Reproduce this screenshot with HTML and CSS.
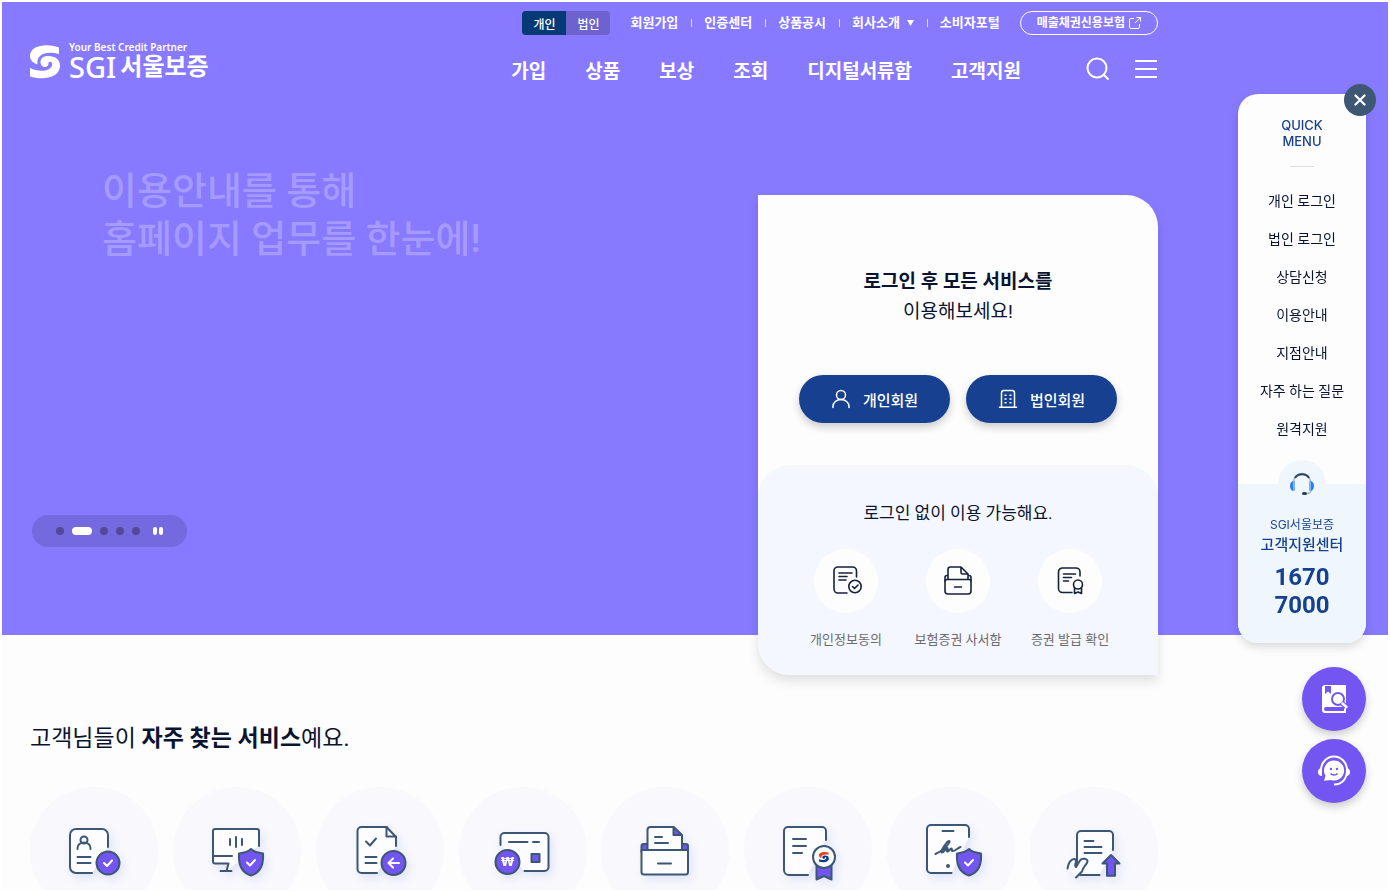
FILE: index.html
```html
<!DOCTYPE html>
<html lang="ko">
<head>
  <meta charset="UTF-8">
  <meta name="viewport" content="width=device-width, initial-scale=1.0">
  <title>SGI서울보증</title>
  <link rel="stylesheet" href="styles.css">
</head>
<body>
  <div class="page">
    <!-- 메인 비주얼 -->
    <div class="hero">
      <header class="header">
        <a href="#" class="logo">
          <svg class="logo-mark" viewBox="0 0 30 34" width="30" height="34" aria-hidden="true">
            <path fill="#fff" d="M29 2.500V9C18 6 6 8 7.500 19.500C3 18 0 15 0 11C0 0 17-2 29 2.500Z"/>
            <path fill="#fff" d="M0 23C8 27 20 27 22 20.500C23 17 20 16 18.500 17.500C19 20 17 22 15 22C12 22 10.500 19.500 10.500 17C10.500 13 14 11 18 11C26 11 30 15 30 21C30 32 14 36 0 31.500Z"/>
          </svg>
          <span class="logo-text">
            <span class="logo-slogan">Your Best Credit Partner</span>
            <span class="logo-name"><span class="logo-en">SGI</span>서울보증</span>
          </span>
        </a>

        <div class="header-right">
          <div class="top-menu">
            <div class="member-type">
              <button type="button" class="on">개인</button>
              <button type="button">법인</button>
            </div>
            <ul class="util">
              <li><a href="#">회원가입</a></li>
              <li><a href="#">인증센터</a></li>
              <li><a href="#">상품공시</a></li>
              <li><a href="#">회사소개<svg class="caret" viewBox="0 0 7 6" width="7" height="6"><path fill="#fff" d="M0 0h7L3.500 6z"/></svg></a></li>
              <li><a href="#">소비자포털</a></li>
            </ul>
            <a href="#" class="btn-credit">매출채권신용보험
              <svg viewBox="0 0 12 12" width="12" height="12" fill="none" stroke="#fff"><path d="M5 1.500H2a1.500 1.500 0 0 0-1.500 1.500v7A1.500 1.500 0 0 0 2 11.500h7a1.500 1.500 0 0 0 1.500-1.500V7M7.500.5h4v4M11.500.5L6 6"/></svg>
            </a>
          </div>
          <div class="main-menu">
            <nav class="gnb">
              <a href="#">가입</a>
              <a href="#">상품</a>
              <a href="#">보상</a>
              <a href="#">조회</a>
              <a href="#">디지털서류함</a>
              <a href="#">고객지원</a>
            </nav>
            <div class="tools">
              <button type="button" aria-label="검색">
                <svg viewBox="0 0 24 24" width="24" height="24" fill="none" stroke="#fff" stroke-width="2" stroke-linecap="round"><circle cx="11" cy="11" r="9.500"/><path d="M18 18l4 4"/></svg>
              </button>
              <button type="button" aria-label="전체메뉴">
                <svg viewBox="0 0 24 24" width="24" height="24" stroke="#fff" stroke-width="2"><path d="M1 4h22M1 12h22M1 20h22"/></svg>
              </button>
            </div>
          </div>
        </div>
      </header>

      <div class="visual">
        <div class="slide">
          <h1>이용안내를 통해<br>홈페이지 업무를 한눈에!</h1>
          <div class="pager">
            <button type="button" class="dot" aria-label="1"></button>
            <button type="button" class="dot on" aria-label="2"></button>
            <button type="button" class="dot" aria-label="3"></button>
            <button type="button" class="dot" aria-label="4"></button>
            <button type="button" class="dot" aria-label="5"></button>
            <button type="button" class="pause" aria-label="정지"></button>
          </div>
        </div>

        <section class="login-card">
          <div class="login-top">
            <p class="login-title"><strong>로그인 후 모든 서비스를</strong><br>이용해보세요!</p>
            <div class="login-btns">
              <button type="button">
                <svg viewBox="0 0 20 20" width="20" height="20" fill="none" stroke="#fff" stroke-width="1.500" stroke-linecap="round"><circle cx="10" cy="6" r="4.500"/><path d="M2 18.500v-1a8 7 0 0 1 16 0v1"/></svg>
                개인회원
              </button>
              <button type="button">
                <svg viewBox="0 0 20 20" width="20" height="20" fill="none" stroke="#fff" stroke-width="1.500" stroke-linecap="round"><path d="M3.500 18V4a2.500 2.500 0 0 1 2.500-2.500h8A2.500 2.500 0 0 1 16.500 4v14M1.500 18.300h17"/><path d="M7 6.200h1M12 6.200h1M7 10h1M12 10h1M7 13.800h1M12 13.800h1"/></svg>
                법인회원
              </button>
            </div>
          </div>
          <div class="login-bottom">
            <p>로그인 없이 이용 가능해요.</p>
            <ul>
              <li><a href="#">
                <span class="circle">
                  <svg viewBox="0 0 32 32" width="32" height="32" class="line-icon"><path d="M26.500 12V6a4 4 0 0 0-4-4H8a4 4 0 0 0-4 4v18a4 4 0 0 0 4 4h9M9 8h13M9 11.500h8M9 15h7"/><circle cx="25" cy="21.500" r="6.200"/><path d="M22.500 21.500l2 2 3.500-3.500"/></svg>
                </span>개인정보동의</a></li>
              <li><a href="#">
                <span class="circle">
                  <svg viewBox="0 0 32 32" width="32" height="32" class="line-icon"><path d="M6 14V4.500A2.500 2.500 0 0 1 8.500 2H19l7 7v5M19 2v5.500A1.500 1.500 0 0 0 20.500 9H26M6 10.500H5a2 2 0 0 0-2 2V16M26 10.500h1a2 2 0 0 1 2 2V16"/><path d="M5 14.500h22a2 2 0 0 1 2 2V26a3 3 0 0 1-3 3H6a3 3 0 0 1-3-3v-9.500a2 2 0 0 1 2-2zM12.500 22h7"/></svg>
                </span>보험증권 사서함</a></li>
              <li><a href="#">
                <span class="circle">
                  <svg viewBox="0 0 32 32" width="32" height="32" class="line-icon"><path d="M26 11V7a4 4 0 0 0-4-4H8.500a4 4 0 0 0-4 4v16.500a4 4 0 0 0 4 4H18M9.500 9h12M9.500 12.500h8M9.500 16h5"/><circle cx="24" cy="19.500" r="4.500"/><path d="M20.500 23v5.500l3.500-1.500 3.500 1.500V23"/></svg>
                </span>증권 발급 확인</a></li>
            </ul>
          </div>
        </section>
      </div>
    </div>

    <!-- 자주 찾는 서비스 -->
    <section class="service">
      <h2>고객님들이 <strong>자주 찾는 서비스</strong>예요.</h2>
      <div class="service-list">
        <a href="#" aria-label="개인정보동의">
          <svg viewBox="0 0 128 128" class="service-icon">
            <path class="paper" d="M78 60V48a6 6 0 0 0-6-6H46a6 6 0 0 0-6 6v32a6 6 0 0 0 6 6h16"/>
            <circle cx="54" cy="53" r="3.500"/><path d="M47.500 62v-1a6.500 5.500 0 0 1 13 0v1M47.500 70h13M47.500 76h13"/>
            <circle class="point" cx="78" cy="76" r="11.500"/><path class="mark" d="M74 76l3 3 5-5.500"/>
          </svg>
        </a>
        <a href="#" aria-label="온라인 보증">
          <svg viewBox="0 0 128 128" class="service-icon">
            <path class="paper" d="M86 59V44a2 2 0 0 0-2-2H42a2 2 0 0 0-2 2v30.500a2 2 0 0 0 2 2h13.500L53.500 84"/>
            <path d="M40 69h19M47.500 84h11M57 52v6M63 50v10M69 52v6"/>
            <path class="point" d="M78 62c3 3 8 4 12 4.500.800 12-2.500 19-12 22-9.500-3-12.800-10-12-22 4-.5 9-1.500 12-4.500z"/><path class="mark" d="M74 75.500l3 3 5-5.500"/>
          </svg>
        </a>
        <a href="#" aria-label="신청서 회신">
          <svg viewBox="0 0 128 128" class="service-icon">
            <path class="paper" d="M80 59V50l-9.500-10H45.500a4 4 0 0 0-4 4v38a4 4 0 0 0 4 4H61"/>
            <path d="M70.500 40v9.500H80M50 54.500l4 4 6-7M49.500 70h11M49.500 76h11"/>
            <circle class="point" cx="77.500" cy="76" r="12"/><path class="mark" d="M83 76H72.500M77 71.500L72.500 76l4.500 4.500"/>
          </svg>
        </a>
        <a href="#" aria-label="보험료 결제">
          <svg viewBox="0 0 128 128" class="service-icon">
            <path class="paper" d="M41.500 58v-8a4 4 0 0 1 4-4h40a4 4 0 0 1 4 4v30a4 4 0 0 1-4 4h-20"/>
            <path d="M50 55h18.500M74 55h6"/><rect class="point" x="72.500" y="67" width="8" height="8"/>
            <circle class="point" cx="48.500" cy="75" r="12"/><text class="won" x="48.500" y="79">₩</text>
          </svg>
        </a>
        <a href="#" aria-label="보험증권 사서함">
          <svg viewBox="0 0 128 128" class="service-icon">
            <path class="point" d="M40.500 65v-6a2 2 0 0 1 2-2h42.500a2 2 0 0 1 2 2v6z"/>
            <path class="paper" d="M46.500 64V43a3 3 0 0 1 3-3h23l8.500 9v15"/><path class="point" d="M72.500 40v8H81z"/>
            <path d="M54 50h7M54 56h13"/>
            <path class="paper" d="M40.500 63H87v22a2.500 2.500 0 0 1-2.500 2.500H43a2.500 2.500 0 0 1-2.500-2.500zM57 76.500h13"/>
          </svg>
        </a>
        <a href="#" aria-label="증권 발급 확인">
          <svg viewBox="0 0 128 128" class="service-icon">
            <path class="paper" d="M82 53v-9a4 4 0 0 0-4-4H44a4 4 0 0 0-4 4v39a5 5 0 0 0 5 5h19"/>
            <path d="M49 52h13M49 59h13M49 66h9"/>
            <path class="point" d="M72.500 78v14.500L80 89l7.500 3.500V78z"/><circle class="paper" cx="80" cy="70" r="11"/>
            <g transform="translate(75 65) scale(.33 .31)"><path class="ci-red" d="M29 2V9C18 6 6 8 7 19C3 18 0 15 0 11C0 0 17-2 29 2Z"/><path class="ci-blue" d="M0 23C8 27 20 27 22 20C23 17 20 16 18 17C19 20 17 22 15 22C12 22 10 19 10 17C10 13 14 11 18 11C26 11 30 15 30 21C30 32 14 36 0 31Z"/></g>
          </svg>
        </a>
        <a href="#" aria-label="전자서명">
          <svg viewBox="0 0 128 128" class="service-icon">
            <path class="paper" d="M82 50v-8a4 4 0 0 0-4-4H44a4 4 0 0 0-4 4v40a4 4 0 0 0 4 4h20.500"/>
            <path d="M55.500 44h11"/><circle class="dot-fill" cx="61" cy="79" r="2"/>
            <path d="M48.500 67c7-3 13-9 14-12 .500-2-2-1-3.500 1.500-3 4-6 9-4 9 2 0 4-5 5.500-4.500 1 .5-1.500 3.500 0 3.500s2.500-3 4-3c1 0-.5 2.500 1 2.500 3 0 5-3 8-4"/>
            <path class="point" d="M82 62c3 3 8 4 12 4.500.800 12-2.500 19-12 22-9.500-3-12.800-10-12-22 4-.5 9-1.500 12-4.500z"/><path class="mark" d="M78 75.500l3 3 5-5.500"/>
          </svg>
        </a>
        <a href="#" aria-label="서류 제출">
          <svg viewBox="0 0 128 128" class="service-icon">
            <path class="paper" d="M83 63V48a4 4 0 0 0-4-4H51a4 4 0 0 0-4 4v30l3 10h19.500"/>
            <path d="M54.500 54h9M54.500 60h17M54.500 66h17"/>
            <path class="hand" d="M37.500 81.500c1-6 3-9 6.500-9.500 2.500 0 2.500 2 1.500 4.500-.5 2-.5 3 .5 3.500l4-6.500c2-3 8-2 7.500 1-.5 3-5 6-5.500 10l-6 6"/>
            <path class="point" d="M81 68l8.500 8.500H85v12.200h-8V76.500h-4.500z"/>
          </svg>
        </a>
      </div>
    </section>
  </div>

  <!-- 퀵메뉴 -->
  <aside class="quick">
    <div class="quick-box">
      <button type="button" class="quick-close" aria-label="닫기">
        <svg viewBox="0 0 12 12" width="12" height="12" stroke="#fff" stroke-width="2.200" stroke-linecap="round"><path d="M1.500 1.500l9 9M10.500 1.500l-9 9"/></svg>
      </button>
      <h2>QUICK<br>MENU</h2>
      <ul>
        <li><a href="#">개인 로그인</a></li>
        <li><a href="#">법인 로그인</a></li>
        <li><a href="#">상담신청</a></li>
        <li><a href="#">이용안내</a></li>
        <li><a href="#">지점안내</a></li>
        <li><a href="#">자주 하는 질문</a></li>
        <li><a href="#">원격지원</a></li>
      </ul>
      <div class="quick-call">
        <span class="headset">
          <svg viewBox="0 0 24 24" width="24" height="24" fill="none">
            <path d="M3.500 10a8.500 8.500 0 0 1 17 0" stroke="#9fb0bd" stroke-width="1.500"/>
            <path d="M5 6a8.500 8.500 0 0 1 14 0" stroke="#2b4459" stroke-width="2"/>
            <path d="M21 17v1a4 4 0 0 1-4 3.500h-2" stroke="#9fb0bd" stroke-width="1.500"/>
            <path d="M4 9v10c-2.500 0-4-2-4-5s1.500-5 4-5zM20 9v10c2.500 0 4-2 4-5s-1.500-5-4-5z" fill="#2a7cf7"/>
            <path d="M3 9h2v10H3zM19 9h2v10h-2z" fill="#7db4ff"/>
            <rect x="12" y="20" width="5" height="3" rx="1.500" fill="#2b4459"/>
          </svg>
        </span>
        <p class="call-sub">SGI서울보증</p>
        <p class="call-name">고객지원센터</p>
        <p class="call-num">1670<br>7000</p>
      </div>
    </div>
    <button type="button" class="fab" aria-label="이용안내">
      <svg viewBox="0 0 32 32" width="32" height="32">
        <path fill="#fff" d="M7 2h21v28H7a3 3 0 0 1-3-3V5a3 3 0 0 1 3-3z"/>
        <path fill="#7356f1" d="M7 3h6v8l-3-2.500L7 11zM8 24h18v4H8a2 2 0 0 1 0-4z"/>
        <circle cx="20" cy="16" r="6" fill="#fff" stroke="#7356f1" stroke-width="2"/>
        <path d="M24.500 20.500l3.500 3.500" stroke="#7356f1" stroke-width="5"/><path d="M24.500 20.500l4 3.500" stroke="#fff" stroke-width="2.500" stroke-linecap="round"/>
      </svg>
    </button>
    <button type="button" class="fab" aria-label="챗봇">
      <svg viewBox="0 0 32 32" width="32" height="32">
        <path d="M3 15a13 13.500 0 0 1 26 0c0 9-5 14.500-13 14.500" fill="none" stroke="#fff" stroke-width="2"/>
        <path fill="#fff" d="M4 13v8c-2.500 0-4-1.500-4-4s1.500-4 4-4zM28 13v8c2.500 0 4-1.500 4-4s-1.500-4-4-4z"/>
        <path fill="#fff" d="M16 5.500a10 10 0 1 1-3 19.500l-7 .8 1.500-5A10 10 0 0 1 16 5.500z"/>
        <circle cx="13" cy="14" r="1.200" fill="#7356f1"/><circle cx="19" cy="14" r="1.200" fill="#7356f1"/>
        <path d="M12.500 18.500c1.500 2 5.500 2 7 0" fill="none" stroke="#7356f1" stroke-width="1.500"/>
      </svg>
    </button>
  </aside>
</body>
</html>
```
FILE: styles.css
```css
:root {
  --purple: #877aff;
  --point: #7356f1;
  --navy: #174190;
  --line: #3c5775;
  --text: #0a1430;
  --bg: #fdfdfd;
}

* { box-sizing: border-box; margin: 0; padding: 0; }

body {
  height: 100vh;
  overflow: hidden;
  border: 2px solid #fff;
  background: #fff;
  color: var(--text);
  font-family: Roboto, "Noto Sans CJK KR", sans-serif;
}

ul { list-style: none; }
a { color: inherit; text-decoration: none; }
button { border: 0; background: none; color: inherit; font-family: inherit; cursor: pointer; }
svg { display: block; }

.page {
  height: 100%;
  overflow: hidden;
  background: var(--bg);
}

/* 헤더 */
.hero {
  padding: 0 230px 0 28px;
  background: var(--purple);
}

.header {
  display: flex;
  justify-content: space-between;
  padding-top: 9px;
  color: #fff;
}

.logo {
  display: flex;
  align-items: flex-end;
  gap: 9px;
  height: 68px;
}
.logo-text { display: flex; flex-direction: column; gap: 3px; }
.logo-slogan {
  font: 600 10px/10px "Noto Sans", sans-serif;
}
.logo-name {
  display: flex;
  align-items: center;
  gap: 4px;
  font-size: 24px;
  font-weight: 700;
  line-height: 24px;
}
.logo-en { font: 500 29px/24px "Noto Sans", sans-serif; }

.top-menu {
  display: flex;
  align-items: center;
  justify-content: flex-end;
  font-size: 13px;
  font-weight: 700;
}

.member-type {
  display: flex;
  overflow: hidden;
  border-radius: 4px;
  background: #6e62cf;
}
.member-type button {
  width: 44px;
  height: 24px;
  font-size: 12px;
  font-weight: 500;
}
.member-type .on { background: #053a76; }

.util { display: flex; margin: 0 20px; line-height: 20px; }
.util li { display: flex; align-items: center; }
.util li + li::before {
  content: "";
  width: 1px;
  height: 8px;
  margin: 0 12px 0 13px;
  background: rgba(255, 255, 255, 0.7);
}
.util a { display: flex; align-items: center; }
.caret { margin-left: 7px; }

.btn-credit {
  display: flex;
  align-items: center;
  gap: 4px;
  height: 24px;
  padding: 0 16px;
  border: 1px solid #fff;
  border-radius: 12px;
  font-size: 12px;
  line-height: 20px;
}

.main-menu {
  display: flex;
  align-items: flex-start;
  justify-content: flex-end;
  gap: 65px;
  margin-top: 22px;
}
.gnb { display: flex; gap: 39px; font-size: 19px; font-weight: 700; line-height: 30px; }
.tools { display: flex; gap: 24px; }

/* 비주얼 */
.visual {
  display: flex;
  justify-content: space-between;
  margin-top: 108px;
}
.slide {
  display: flex;
  flex-direction: column;
  justify-content: space-between;
  align-items: flex-start;
  margin: -28px 0 88px;
  padding-left: 2px;
}
.slide h1 {
  padding-left: 70px;
  color: rgba(255, 255, 255, 0.25);
  font-size: 38px;
  font-weight: 500;
  line-height: 48px;
}

.pager {
  display: flex;
  align-items: center;
  gap: 8px;
  height: 32px;
  padding: 0 24px;
  border-radius: 16px;
  background: #7569df;
}
.dot { width: 8px; height: 8px; border-radius: 4px; background: #53489b; }
.dot.on { width: 20px; background: #fff; }
.pause {
  display: flex;
  gap: 2px;
  margin-left: 5px;
}
.pause::before,
.pause::after { content: ""; width: 4px; height: 8px; border-radius: 2px; background: #fff; }

/* 로그인 카드 */
.login-card {
  width: 400px;
  margin-bottom: -40px;
  border-radius: 0 32px 0 32px;
  background: var(--bg);
  box-shadow: 0 6px 12px rgba(0, 0, 0, 0.12);
  text-align: center;
}
.login-top { padding: 72px 41px 42px; }
.login-title { font-size: 19px; line-height: 30px; }
.login-title strong { font-weight: 700; }

.login-btns { display: flex; gap: 16px; margin-top: 48px; }
.login-btns button {
  display: flex;
  flex: 1;
  align-items: center;
  justify-content: center;
  gap: 12px;
  height: 48px;
  border-radius: 24px;
  background: var(--navy);
  box-shadow: 0 4px 8px rgba(0, 0, 0, 0.2);
  color: #fff;
  font-size: 15px;
  font-weight: 500;
}

.login-bottom {
  padding: 32px 32px 24px;
  border-radius: 32px 32px 0 32px;
  background: #f4f7fd;
}
.login-bottom p { font-size: 17px; line-height: 32px; }
.login-bottom ul { display: grid; grid-template-columns: repeat(3, 1fr); margin-top: 20px; }
.login-bottom a {
  display: flex;
  flex-direction: column;
  align-items: center;
  gap: 16px;
  color: #6b6b70;
  font-size: 13px;
  line-height: 22px;
}
.circle {
  display: flex;
  align-items: center;
  justify-content: center;
  width: 64px;
  height: 64px;
  border-radius: 50%;
  background: var(--bg);
}
.line-icon {
  fill: none;
  stroke: #17213c;
  stroke-width: 1.6;
  stroke-linecap: round;
  stroke-linejoin: round;
}

/* 자주 찾는 서비스 */
.service { padding: 88px 230px 0 28px; }
.service h2 { font-size: 23px; font-weight: 400; line-height: 32px; }
.service h2 strong { font-weight: 700; }
.service-list {
  display: flex;
  justify-content: space-between;
  margin-top: 32px;
}
.service-list a {
  width: 128px;
  height: 128px;
  border-radius: 50%;
  background: #f8f8fd;
}
.service-icon {
  fill: none;
  stroke: var(--line);
  stroke-width: 2;
  stroke-linecap: round;
  stroke-linejoin: round;
  filter: drop-shadow(3px 4px 4px rgba(60, 87, 180, 0.12));
}
.service-icon .paper { fill: #fdfdff; }
.service-icon .point { fill: var(--point); }
.service-icon .mark { stroke: #fff; }
.service-icon .dot-fill { fill: var(--line); stroke: none; }
.service-icon .hand { fill: #f8f8fd; }
.service-icon .won {
  fill: #fff;
  stroke: none;
  font-family: "DejaVu Sans", sans-serif;
  font-size: 12px;
  font-weight: 700;
  text-anchor: middle;
}
.service-icon .ci-red { fill: #f03e1c; stroke: none; }
.service-icon .ci-blue { fill: #0b3c8c; stroke: none; }

/* 퀵메뉴 */
.quick {
  position: fixed;
  top: 94px;
  right: 24px;
  display: flex;
  flex-direction: column;
  align-items: flex-end;
  gap: 8px;
}
.quick-box {
  position: relative;
  width: 128px;
  margin-bottom: 16px;
  border-radius: 20px;
  background: var(--bg);
  box-shadow: 0 4px 10px rgba(0, 0, 0, 0.14);
  text-align: center;
}
.quick-close {
  position: absolute;
  top: -10px;
  right: -10px;
  display: flex;
  align-items: center;
  justify-content: center;
  width: 32px;
  height: 32px;
  border-radius: 50%;
  background: #3e5874;
}
.quick-box h2 {
  padding-top: 23px;
  color: var(--navy);
  font-family: Inter, sans-serif;
  font-size: 13px;
  font-weight: 500;
  line-height: 16px;
}
.quick-box h2::after {
  content: "";
  display: block;
  width: 24px;
  height: 1px;
  margin: 17px auto 15px;
  background: #ddd;
}
.quick-box ul { padding-bottom: 36px; font-size: 14px; line-height: 38px; }
.quick-call {
  padding-bottom: 24px;
  border-radius: 0 0 20px 20px;
  background: #eff7fc;
  color: var(--navy);
}
.headset {
  display: flex;
  align-items: center;
  justify-content: center;
  width: 48px;
  height: 48px;
  margin: 0 auto;
  border-radius: 50%;
  background: #eff7fc;
  transform: translateY(-24px);
}
.call-sub {
  margin-top: -15px;
  font-family: Inter, "Noto Sans CJK KR", sans-serif;
  font-size: 12px;
  line-height: 16px;
}
.call-name { font-size: 15px; font-weight: 500; line-height: 24px; }
.call-num { margin-top: 6px; font-size: 24px; font-weight: 700; line-height: 28px; }

.fab {
  display: flex;
  align-items: center;
  justify-content: center;
  width: 64px;
  height: 64px;
  border-radius: 50%;
  background: var(--point);
  box-shadow: 0 4px 8px rgba(0, 0, 0, 0.2);
}
```
